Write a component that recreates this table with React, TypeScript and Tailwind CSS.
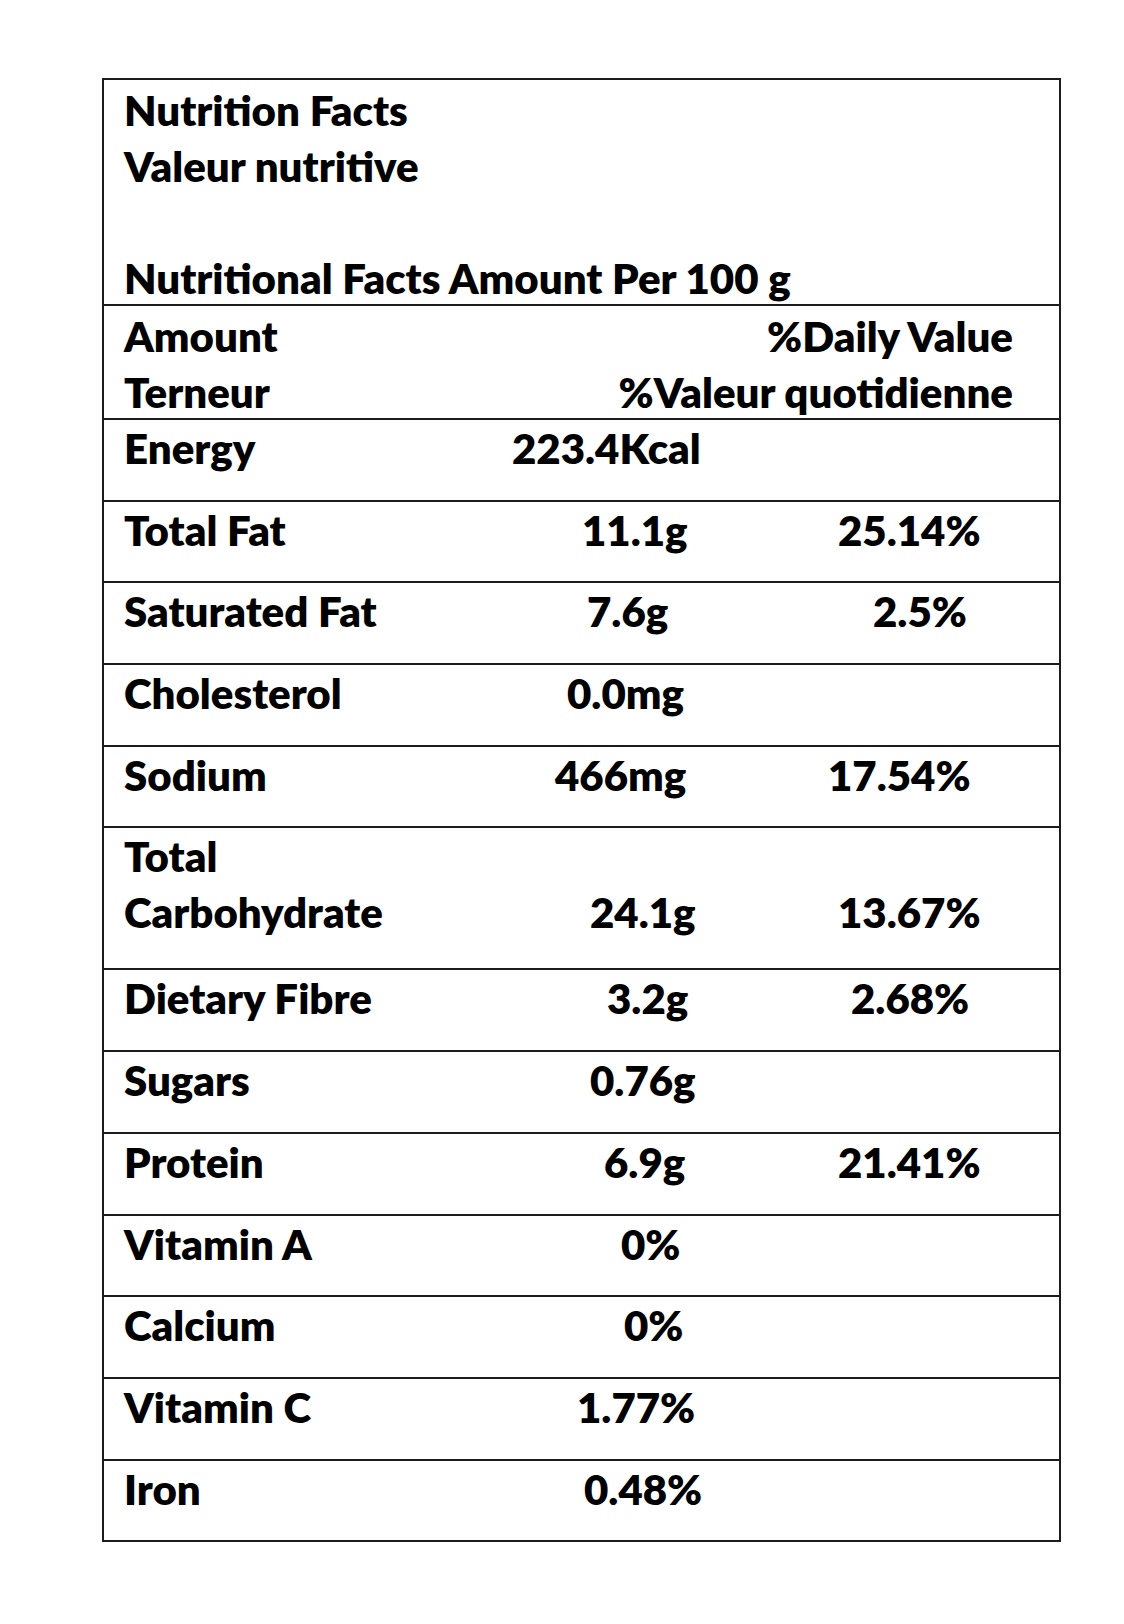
type Row = {
  label: string[]
  amount: string
  amountCls: string
  dv?: string
  dvCls?: string
  tall?: boolean
}

const rows: Row[] = [
  { label: ["Energy"], amount: "223.4Kcal", amountCls: "pl-[88px]" },
  { label: ["Total Fat"], amount: "11.1g", amountCls: "pl-[158px]", dv: "25.14%", dvCls: "pl-[14px]" },
  { label: ["Saturated Fat"], amount: "7.6g", amountCls: "pl-[163px]", dv: "2.5%", dvCls: "pl-[49px]" },
  { label: ["Cholesterol"], amount: "0.0mg", amountCls: "pl-[143px]" },
  { label: ["Sodium"], amount: "466mg", amountCls: "pl-[131px]", dv: "17.54%", dvCls: "pl-[4px]" },
  {
    label: ["Total", "Carbohydrate"],
    amount: "24.1g",
    amountCls: "pl-[166px]",
    dv: "13.67%",
    dvCls: "pl-[14px]",
    tall: true,
  },
  { label: ["Dietary Fibre"], amount: "3.2g", amountCls: "pl-[183px]", dv: "2.68%", dvCls: "pl-[27px]" },
  { label: ["Sugars"], amount: "0.76g", amountCls: "pl-[166px]" },
  { label: ["Protein"], amount: "6.9g", amountCls: "pl-[180px]", dv: "21.41%", dvCls: "pl-[14px]" },
  { label: ["Vitamin A"], amount: "0%", amountCls: "pl-[197px]" },
  { label: ["Calcium"], amount: "0%", amountCls: "pl-[200px]" },
  { label: ["Vitamin C"], amount: "1.77%", amountCls: "pl-[153px]" },
  { label: ["Iron"], amount: "0.48%", amountCls: "pl-[160px]" },
]

export default function App() {
  return (
    <div className="min-h-[1624px] w-[1124px] bg-white pl-[102px] pt-[78px] font-['Lato',sans-serif] text-[42px] font-extrabold text-black">
      <div className="w-[959px] border-2 border-[#1c1c1c]">
        {/* Title block */}
        <div className="h-[224px] pl-[20px] pt-[2px] leading-[56px]">
          <p>Nutrition Facts</p>
          <p>Valeur nutritive</p>
          <p>&nbsp;</p>
          <p>Nutritional Facts Amount Per 100 g</p>
        </div>

        {/* Column heads */}
        <div className="flex h-[114px] justify-between border-t-2 border-[#1c1c1c] pl-[20px] pr-[46px] pt-[2px] leading-[56px]">
          <div>
            <p>Amount</p>
            <p>Terneur</p>
          </div>
          <div className="text-right">
            <p>%Daily Value</p>
            <p>%Valeur quotidienne</p>
          </div>
        </div>

        {rows.map((r) => (
          <div
            key={r.label.join(" ")}
            className={
              "grid grid-cols-[300px_400px_1fr] border-t-2 border-[#1c1c1c] pl-[20px] leading-[56px] " +
              (r.tall ? "h-[142px]" : "h-[81.7px]")
            }
          >
            <div>
              {r.label.map((l) => (
                <p key={l} className="whitespace-nowrap">{l}</p>
              ))}
            </div>
            <div className={r.tall ? "pt-[56px]" : ""}>
              <p className={"whitespace-nowrap " + r.amountCls}>{r.amount}</p>
            </div>
            <div className={r.tall ? "pt-[56px]" : ""}>
              {r.dv ? <p className={"whitespace-nowrap " + r.dvCls}>{r.dv}</p> : null}
            </div>
          </div>
        ))}
      </div>
    </div>
  )
}
